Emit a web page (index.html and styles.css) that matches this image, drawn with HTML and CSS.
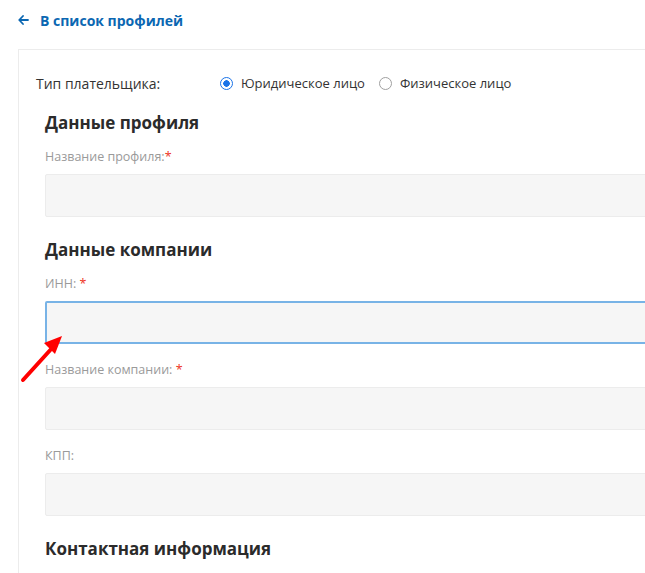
FILE: index.html
```html
<!DOCTYPE html>
<html lang="ru">
<head>
<meta charset="utf-8">
<link rel="stylesheet" href="styles.css">
</head>
<body>
<div class="page">
  <a class="back" href="#">
    <svg class="back-icon" width="11" height="10" viewBox="0 0 11 10"><path d="M10 5H1.5M5 1L1.2 5 5 9" fill="none" stroke="#0b67b2" stroke-width="1.8" stroke-linecap="round" stroke-linejoin="round"/></svg>
    <span>В список профилей</span>
  </a>
  <div class="card">
    <div class="payer">
      <span class="payer-label">Тип плательщика:</span>
      <label class="radio"><span class="dot checked"></span>Юридическое лицо</label>
      <label class="radio"><span class="dot"></span>Физическое лицо</label>
    </div>
    <h2 class="section">Данные профиля</h2>
    <div class="field">
      <div class="label">Название профиля:<span class="req">*</span></div>
      <div class="input"></div>
    </div>
    <h2 class="section">Данные компании</h2>
    <div class="field">
      <div class="label">ИНН: <span class="req">*</span></div>
      <div class="input focus"></div>
    </div>
    <div class="field">
      <div class="label">Название компании: <span class="req">*</span></div>
      <div class="input"></div>
    </div>
    <div class="field">
      <div class="label">КПП:</div>
      <div class="input"></div>
    </div>
    <h2 class="section">Контактная информация</h2>
  </div>
  <svg class="pointer" width="60" height="60" viewBox="0 0 60 60"><path d="M3 47L33 14" stroke="#f00" stroke-width="4" stroke-linecap="round"/><path d="M42 3L24 10L35 21Z" fill="#f00"/></svg>
</div>
</body>
</html>
```
FILE: styles.css
```css
html, body { margin: 0; padding: 0; background: #fff; overflow: hidden; }
body { font-family: "Open Sans", "Noto Sans", sans-serif; color: #333; }
.page { position: relative; width: 645px; height: 573px; overflow: hidden; }
.back { display: flex; align-items: center; gap: 11px; padding: 12px 0 0 18px; height: 16px; text-decoration: none; color: #0b67b2; font-weight: 700; font-size: 14px; }
.back-icon { display: block; }
.card { margin: 21px 0 0 18px; width: 720px; border-top: 1px solid #ececec; border-left: 1px solid #ececec; padding: 18px 0 0 26px; box-sizing: border-box; height: 600px; }
.payer { display: flex; align-items: center; margin-left: -9px; margin-bottom: 10px; font-size: 13px; color: #333; height: 30px; }
.payer-label { width: 184px; font-size: 14px; }
.radio { display: flex; align-items: center; margin-right: 14px; }
.dot { width: 13px; height: 13px; border: 1px solid #a0a0a0; border-radius: 50%; margin-right: 8px; box-sizing: border-box; display: inline-block; }
.dot.checked { border: 1.5px solid #1a73e8; background: radial-gradient(circle, #1a73e8 0 3px, #fff 3.5px); }
.section { font-size: 17px; font-weight: 700; color: #2b2b2b; margin: 0; height: 22px; line-height: 22px; padding-top: 4px; }
.section + .field { margin-top: 15px; }
.field + .section { margin-top: 1px; }
.label { font-size: 12.5px; color: #9a9a9a; height: 16px; line-height: 16px; }
.req { color: #e32; }
.input { margin-top: 9px; height: 43px; background: #f6f6f6; border: 1px solid #ececec; border-radius: 2px; box-sizing: border-box; margin-bottom: 18px; }
.input.focus { border: 2px solid #78b3e6; }
.pointer { position: absolute; left: 20px; top: 333px; }
```
